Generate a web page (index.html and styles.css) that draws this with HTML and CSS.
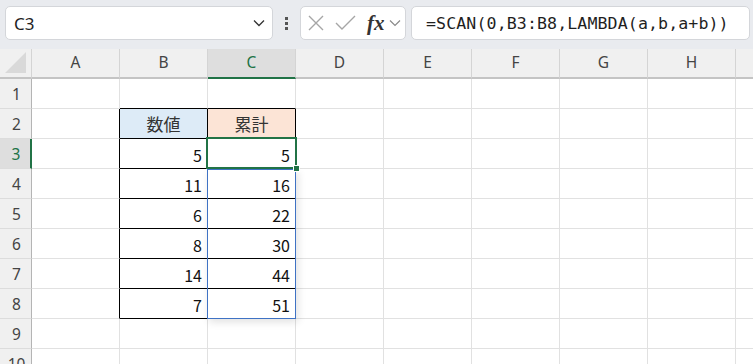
FILE: index.html
```html
<!DOCTYPE html>
<html lang="ja">
<head>
  <meta charset="UTF-8">
  <meta name="viewport" content="width=device-width, initial-scale=1.0">
  <title>SCAN</title>
  <link rel="stylesheet" href="styles.css">
</head>
<body>
  <!-- Formula bar -->
  <div class="bar">
    <div class="namebox">
      <span class="ref">C3</span>
      <svg class="chev" width="12" height="8" viewBox="0 0 12 8"><path d="M1 1.5 L6 6.5 L11 1.5" fill="none" stroke="#333" stroke-width="1.3"/></svg>
    </div>
    <div class="dots"><i></i><i></i><i></i></div>
    <div class="fxbox">
      <svg width="18" height="18" viewBox="0 0 18 18"><path d="M2 2 L16 16 M16 2 L2 16" stroke="#a6a6a6" stroke-width="1.4" fill="none"/></svg>
      <svg width="22" height="18" viewBox="0 0 22 18"><path d="M1 9 L7 15 L20 2" stroke="#a6a6a6" stroke-width="1.4" fill="none"/></svg>
      <span class="fx">fx</span>
      <svg width="12" height="8" viewBox="0 0 12 8"><path d="M1 1.5 L6 6.5 L11 1.5" fill="none" stroke="#8a8a8a" stroke-width="1.2"/></svg>
    </div>
    <div class="formula">=SCAN(0,B3:B8,LAMBDA(a,b,a+b))</div>
  </div>

  <!-- Sheet -->
  <div class="sheet">
    <div class="corner"><svg width="22" height="22" viewBox="0 0 22 22"><polygon points="21,0 21,21 0,21" fill="#d9d9d9"/></svg></div>
    <div class="ch">A</div><div class="ch">B</div><div class="ch active">C</div><div class="ch">D</div>
    <div class="ch">E</div><div class="ch">F</div><div class="ch">G</div><div class="ch">H</div><div class="ch last"></div>

    <div class="rh">1</div>
    <div class="c"></div><div class="c bb"></div><div class="c bb"></div><div class="c"></div>
    <div class="c"></div><div class="c"></div><div class="c"></div><div class="c"></div><div class="c last"></div>

    <div class="rh">2</div>
    <div class="c br"></div><div class="c bx head blue">数値</div><div class="c bx head peach">累計</div><div class="c"></div>
    <div class="c"></div><div class="c"></div><div class="c"></div><div class="c"></div><div class="c last"></div>

    <div class="rh active">3</div>
    <div class="c br"></div><div class="c bx">5</div><div class="c bx">5</div><div class="c"></div>
    <div class="c"></div><div class="c"></div><div class="c"></div><div class="c"></div><div class="c last"></div>

    <div class="rh">4</div>
    <div class="c br"></div><div class="c bx">11</div><div class="c bx">16</div><div class="c"></div>
    <div class="c"></div><div class="c"></div><div class="c"></div><div class="c"></div><div class="c last"></div>

    <div class="rh">5</div>
    <div class="c br"></div><div class="c bx">6</div><div class="c bx">22</div><div class="c"></div>
    <div class="c"></div><div class="c"></div><div class="c"></div><div class="c"></div><div class="c last"></div>

    <div class="rh">6</div>
    <div class="c br"></div><div class="c bx">8</div><div class="c bx">30</div><div class="c"></div>
    <div class="c"></div><div class="c"></div><div class="c"></div><div class="c"></div><div class="c last"></div>

    <div class="rh">7</div>
    <div class="c br"></div><div class="c bx">14</div><div class="c bx">44</div><div class="c"></div>
    <div class="c"></div><div class="c"></div><div class="c"></div><div class="c"></div><div class="c last"></div>

    <div class="rh">8</div>
    <div class="c br"></div><div class="c bx">7</div><div class="c bx">51</div><div class="c"></div>
    <div class="c"></div><div class="c"></div><div class="c"></div><div class="c"></div><div class="c last"></div>

    <div class="rh">9</div>
    <div class="c"></div><div class="c"></div><div class="c"></div><div class="c"></div>
    <div class="c"></div><div class="c"></div><div class="c"></div><div class="c"></div><div class="c last"></div>

    <div class="rh">10</div>
    <div class="c"></div><div class="c"></div><div class="c"></div><div class="c"></div>
    <div class="c"></div><div class="c"></div><div class="c"></div><div class="c"></div><div class="c last"></div>

    <!-- selection overlays -->
    <div class="spill"></div>
    <div class="selected"><span class="handle"></span></div>
  </div>
</body>
</html>
```

FILE: styles.css
```css
* {
  box-sizing: border-box;
}
body {
  margin: 0;
  width: 753px;
  height: 364px;
  overflow: hidden;
  background: #fff;
  font-family: "Noto Sans", "Noto Sans CJK JP", sans-serif;
}

/* formula bar */
.bar {
  display: flex;
  align-items: center;
  height: 49px;
  padding: 6px 3px 9px 5px;
  background: #e9ebef;
}
.namebox,
.fxbox,
.formula {
  height: 34px;
  background: #fff;
  border: 1px solid #d4d6da;
  border-radius: 5px;
  display: flex;
  align-items: center;
}
.namebox {
  width: 268px;
  padding: 0 7px 0 8px;
  justify-content: space-between;
}
.ref {
  font-size: 17px;
  color: #1f1f1f;
}
.dots {
  width: 27px;
  display: flex;
  flex-direction: column;
  align-items: center;
  gap: 2px;
}
.dots i {
  display: block;
  width: 3px;
  height: 3px;
  background: #555;
}
.fxbox {
  width: 106px;
  padding: 0 3px 0 6px;
  gap: 8px;
}
.fxbox svg:first-child {
  margin-right: 2px;
}
.fx {
  font-family: "Liberation Serif", serif;
  font-style: italic;
  font-weight: bold;
  font-size: 21px;
  color: #333;
  margin-left: 2px;
  margin-right: -4px;
  line-height: 1;
}
.formula {
  flex: 1;
  margin-left: 5px;
  padding-left: 14px;
  font-family: "DejaVu Sans Mono", monospace;
  font-size: 16.6px;
  letter-spacing: 0.1px;
  color: #1f1f1f;
}

/* sheet grid */
.sheet {
  position: relative;
  display: grid;
  grid-template-columns: 32px repeat(8, 88px) 1fr;
  grid-auto-rows: 30px;
}
.corner,
.ch,
.rh {
  background: #f0f0f0;
  color: #444;
  font-size: 15.5px;
  display: flex;
  align-items: center;
  justify-content: center;
}
.corner {
  border-right: 1px solid #d4d4d4;
  border-bottom: 2px solid #c4c4c4;
  align-items: flex-end;
  justify-content: flex-end;
  padding: 0 4px 3px 0;
}
.ch {
  border-right: 1px solid #d4d4d4;
  border-bottom: 2px solid #c4c4c4;
  padding-bottom: 2px;
}
.ch.last {
  border-right: none;
}
.ch.active {
  background: #dedede;
  color: #217346;
  border-bottom-color: #217346;
}
.rh {
  border-right: 1px solid #b4b4b4;
  border-bottom: 1px solid #dcdcdc;
  padding-left: 2px;
}
.rh.active {
  background: #dedede;
  color: #217346;
  border-right: 2px solid #217346;
}
.c {
  border-right: 1px solid #e1e1e1;
  border-bottom: 1px solid #e1e1e1;
  display: flex;
  align-items: center;
  justify-content: flex-end;
  padding: 2px 5px 0 0;
  font-family: "Noto Sans CJK JP", sans-serif;
  font-size: 16px;
  color: #111;
}
.c.last {
  border-right: none;
}
.br {
  border-right-color: #000;
}
.bb {
  border-bottom-color: #000;
}
.bx {
  border-right-color: #000;
  border-bottom-color: #000;
}
.head {
  justify-content: center;
  padding: 0;
  font-size: 17px;
  color: #333;
}
.blue {
  background: #ddebf7;
}
.peach {
  background: #fce4d6;
}

/* selection overlays */
.spill {
  position: absolute;
  left: 207px;
  top: 120px;
  width: 89px;
  height: 150px;
  border: 1px solid #3f72c4;
  box-shadow: 2px 3px 8px rgba(0, 0, 0, 0.12);
}
.selected {
  position: absolute;
  left: 206px;
  top: 88px;
  width: 91px;
  height: 32px;
  border: 2px solid #217346;
}
.handle {
  position: absolute;
  right: -5px;
  bottom: -5px;
  width: 7px;
  height: 7px;
  background: #217346;
  border: 1px solid #fff;
}
```
